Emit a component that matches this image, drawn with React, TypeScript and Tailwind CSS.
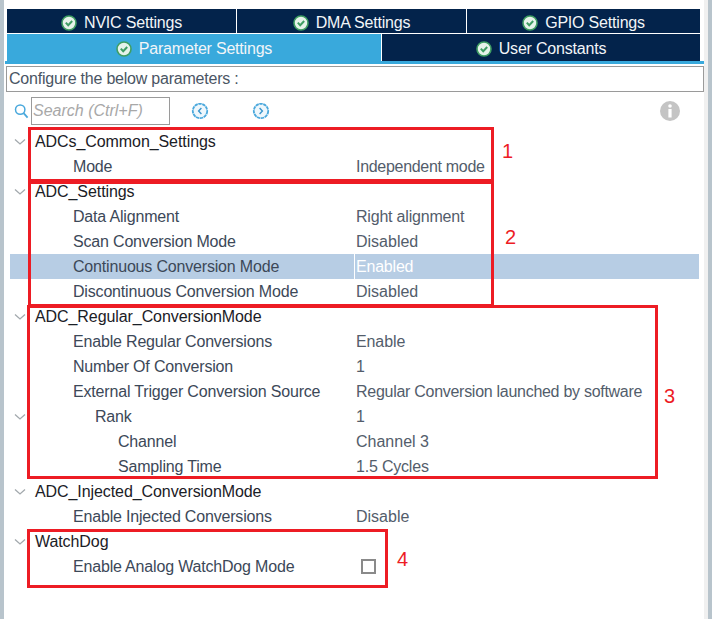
const CheckBadge = () => (
  <svg width="16" height="16" viewBox="0 0 16 16" className="shrink-0">
    <circle cx="8" cy="8" r="7" fill="#e6f3ea" stroke="#3f9e63" strokeWidth="1.6" />
    <path d="M4.8 7.6 L7.2 10.2 L11.2 6" fill="none" stroke="#3f9e63" strokeWidth="2" />
  </svg>
)

const Chevron = () => (
  <svg width="12" height="8" viewBox="0 0 12 8" className="shrink-0">
    <path d="M1 1.5 L6 6 L11 1.5" fill="none" stroke="#a3a9ad" strokeWidth="1.3" />
  </svg>
)

const NavCircle = ({ left }: { left?: boolean }) => (
  <svg width="18" height="18" viewBox="0 0 18 18">
    <circle cx="9" cy="9" r="7.2" fill="#eef7fc" stroke="#4aa8dc" strokeWidth="1.8" strokeDasharray="3.4 0.6" />
    <path d={left ? 'M10.4 6 L7.6 9 L10.4 12' : 'M7.6 6 L10.4 9 L7.6 12'} fill="none" stroke="#3a95cc" strokeWidth="1.4" />
  </svg>
)

const Tab = ({ label, className }: { label: string; className: string }) => (
  <div className={`flex items-center justify-center gap-[7px] tracking-[-0.2px] text-[#f2f5f8] ${className}`}>
    <CheckBadge />
    <span>{label}</span>
  </div>
)

type RowProps = {
  label: string
  value?: string
  valueClass?: string
  indent?: number
  head?: boolean
  chevron?: boolean
  selected?: boolean
  checkbox?: boolean
}

const indents = ['pl-[25px]', 'pl-[63px]', 'pl-[85px]', 'pl-[108px]']

const Row = ({ label, value, valueClass = '', indent = 0, head, chevron, selected, checkbox }: RowProps) => (
  <div className={`relative flex h-[25px] items-center ${selected ? 'bg-[#b7cde4]' : ''}`}>
    {chevron && (
      <span className="absolute left-[4px] top-[9px] flex">
        <Chevron />
      </span>
    )}
    <div className={`w-[345px] shrink-0 whitespace-nowrap ${indents[indent]} ${head ? 'tracking-[-0.08px] text-[#1b2026]' : 'tracking-[-0.18px] text-[#3c4858]'}`}>
      {label}
    </div>
    {checkbox ? (
      <div className="ml-[6px] h-[15px] w-[15px] border-2 border-[#8a8a8a] bg-white" />
    ) : (
      <div className={`h-full whitespace-nowrap leading-[25px] ${valueClass} ${selected ? '-ml-[1px] border-l border-white pl-[1px] text-white' : 'pl-[1px] text-[#535d6b]'}`}>
        {value}
      </div>
    )}
  </div>
)

const Mark = ({ className, n, numClass }: { className: string; n: string; numClass: string }) => (
  <div className={`absolute border-[3px] border-[#ed1c24] ${className}`}>
    <span className={`absolute text-[20px] leading-none text-[#ed1c24] ${numClass}`}>{n}</span>
  </div>
)

export default function App() {
  return (
    <div className="relative h-[619px] w-[712px] overflow-hidden bg-white font-['Liberation_Sans',Arial,sans-serif] text-[16px]">
      <div className="absolute bottom-0 left-0 top-0 w-[4px] bg-[#b8c4cc]" />
      <div className="absolute bottom-0 right-0 top-0 w-[8px] border-l-4 border-[#f0f0f0] bg-[#b8c4cc]" />

      <div className="pl-[5px] pt-[9px]">
        <div className="ml-[2px] flex h-[24px] w-[693px] bg-[#03234b]">
          <Tab label="NVIC Settings" className="w-[230px] border-r border-white pt-[4px]" />
          <Tab label="DMA Settings" className="w-[230px] border-r border-white pt-[4px]" />
          <Tab label="GPIO Settings" className="flex-1 pt-[4px]" />
        </div>
        <div className="ml-[2px] mt-[1px] flex h-[27px] w-[693px]">
          <Tab label="Parameter Settings" className="w-[374px] bg-[#39a9dc] pt-[2px]" />
          <Tab label="User Constants" className="ml-[1px] flex-1 bg-[#03234b] pt-[2px]" />
        </div>
        <div className="h-[3px] w-[701px] bg-[#39a9dc]" />

        <div className="ml-[1px] mt-[2px] flex h-[26px] w-[698px] items-center border border-[#9a9a9a] pl-[2px] tracking-[-0.22px] text-[#4a5564]">
          Configure the below parameters :
        </div>

        <div className="relative mt-[5px] flex h-[28px] items-center pl-[9px]">
          <svg width="15" height="16" viewBox="0 0 15 16" className="shrink-0">
            <circle cx="6.2" cy="6.6" r="4.7" fill="none" stroke="#49a8dc" strokeWidth="1.5" />
            <path d="M9.6 10.2 L13.6 14.6" stroke="#49a8dc" strokeWidth="1.8" />
          </svg>
          <div className="ml-[2px] flex h-[28px] w-[139px] items-center border border-[#9a9a9a] pl-[1px] italic text-[#a8a8a8]">
            Search (Ctrl+F)
          </div>
          <span className="ml-[21px] flex">
            <NavCircle left />
          </span>
          <span className="ml-[43px] flex">
            <NavCircle />
          </span>
          <svg width="20" height="20" viewBox="0 0 20 20" className="absolute left-[655px] top-[4px]">
            <circle cx="10" cy="10" r="10" fill="#c4c4c4" />
            <circle cx="10" cy="5" r="1.8" fill="#fff" />
            <rect x="8.4" y="8" width="3.2" height="8.5" fill="#fff" />
          </svg>
        </div>

        <div className="ml-[5px] mt-[4px] w-[689px]">
          <Row head chevron label="ADCs_Common_Settings" />
          <Row indent={1} label="Mode" value="Independent mode" valueClass="tracking-[-0.3px]" />
          <Row head chevron label="ADC_Settings" />
          <Row indent={1} label="Data Alignment" value="Right alignment" valueClass="tracking-[-0.2px]" />
          <Row indent={1} label="Scan Conversion Mode" value="Disabled" />
          <Row indent={1} selected label="Continuous Conversion Mode" value="Enabled" valueClass="tracking-[-0.2px]" />
          <Row indent={1} label="Discontinuous Conversion Mode" value="Disabled" />
          <Row head chevron label="ADC_Regular_ConversionMode" />
          <Row indent={1} label="Enable Regular Conversions" value="Enable" valueClass="tracking-[-0.1px]" />
          <Row indent={1} label="Number Of Conversion" value="1" />
          <Row indent={1} label="External Trigger Conversion Source" value="Regular Conversion launched by software" valueClass="tracking-[-0.28px]" />
          <Row indent={2} chevron label="Rank" value="1" />
          <Row indent={3} label="Channel" value="Channel 3" />
          <Row indent={3} label="Sampling Time" value="1.5 Cycles" valueClass="tracking-[-0.2px]" />
          <Row head chevron label="ADC_Injected_ConversionMode" />
          <Row indent={1} label="Enable Injected Conversions" value="Disable" />
          <Row head chevron label="WatchDog" />
          <Row indent={1} checkbox label="Enable Analog WatchDog Mode" />
        </div>
      </div>

      <Mark className="left-[28px] top-[127px] h-[55px] w-[466px]" n="1" numClass="left-[471px] top-[11px]" />
      <Mark className="left-[28px] top-[181px] h-[126px] w-[466px]" n="2" numClass="left-[474px] top-[43px]" />
      <Mark className="left-[27px] top-[305px] h-[174px] w-[631px]" n="3" numClass="left-[634px] top-[78px]" />
      <Mark className="left-[27px] top-[529px] h-[59px] w-[361px]" n="4" numClass="left-[367px] top-[17px]" />
    </div>
  )
}
